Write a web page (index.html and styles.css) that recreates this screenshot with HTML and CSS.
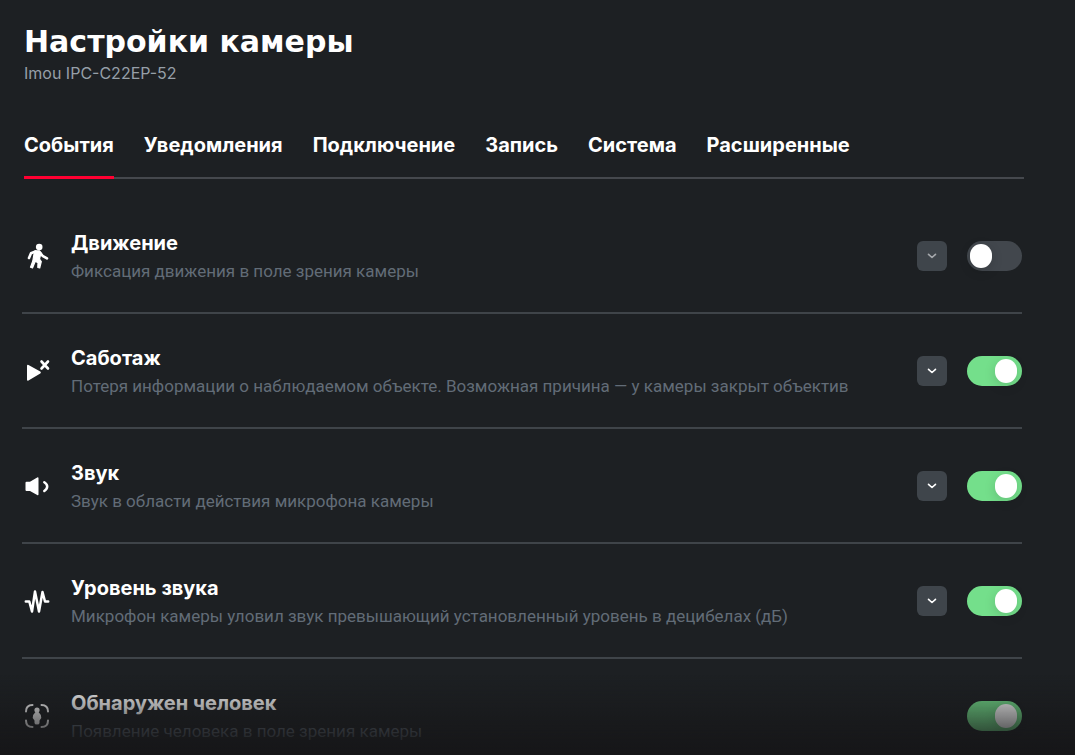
FILE: index.html
```html
<!DOCTYPE html>
<html lang="ru">
<head>
<meta charset="utf-8">
<title>Настройки камеры</title>
<link rel="stylesheet" href="styles.css">
</head>
<body>
<main class="page">
  <header class="header">
    <h1 class="title">Настройки камеры</h1>
    <p class="model">Imou IPC-C22EP-52</p>
  </header>
  <nav class="tabs" aria-label="Разделы настроек">
    <button class="tab tab-active" type="button" aria-current="page">События</button>
    <button class="tab" type="button">Уведомления</button>
    <button class="tab" type="button">Подключение</button>
    <button class="tab" type="button">Запись</button>
    <button class="tab" type="button">Система</button>
    <button class="tab" type="button">Расширенные</button>
  </nav>
  <ul class="events">
    <li class="event">
      <svg class="icon" viewBox="0 0 30 30" aria-hidden="true"><circle cx="17.200" cy="6" r="3.300" fill="currentColor"/><path d="M13.500 10.500 L9 12.300 L7 17 M18 11.500 L20.500 14.800 L25 17.300" fill="none" stroke="currentColor" stroke-width="2.600" stroke-linecap="round" stroke-linejoin="round"/><path d="M13 9.800 H17.500 L19 12 L17.500 18 L19.300 20.500 L17.700 27 L15.800 26.500 L16 21.800 L13.300 20.300 L10.500 26.900 L8.500 26.300 L10.800 20 L11.800 14 Z" fill="currentColor" stroke="currentColor" stroke-width="1.200" stroke-linejoin="round"/></svg>
      <div class="text">
        <label class="name" for="motion">Движение</label>
        <p class="note">Фиксация движения в поле зрения камеры</p>
      </div>
      <button class="expand expand-muted" type="button" aria-label="Развернуть"><svg class="chevron" viewBox="0 0 10 6" aria-hidden="true"><path d="M1.500 1.300 5 4.500 8.500 1.300"/></svg></button>
      <input class="switch" type="checkbox" role="switch" id="motion">
    </li>
    <li class="event">
      <svg class="icon" viewBox="0 0 30 30" aria-hidden="true"><path d="M6.500 9 18.300 15.600 Q19.500 16.600 18.300 17.600 L6.500 24.600 Q5 25 5 23.700 V9.800 Q5 8.500 6.500 9Z" fill="currentColor"/><path d="M19.500 5.500 26 12.500 M26 5.500 19.500 12.500" stroke="currentColor" stroke-width="2.600" stroke-linecap="round"/></svg>
      <div class="text">
        <label class="name" for="sabotage">Саботаж</label>
        <p class="note">Потеря информации о наблюдаемом объекте. Возможная причина — у камеры закрыт объектив</p>
      </div>
      <button class="expand" type="button" aria-label="Развернуть"><svg class="chevron" viewBox="0 0 10 6" aria-hidden="true"><path d="M1.500 1.300 5 4.500 8.500 1.300"/></svg></button>
      <input class="switch" type="checkbox" role="switch" id="sabotage" checked>
    </li>
    <li class="event">
      <svg class="icon" viewBox="0 0 30 30" aria-hidden="true"><path d="M4.500 10.800 H8 L15.200 6.500 Q16.500 6 16.500 7.300 V23.300 Q16.500 24.600 15.200 24 L8 20 H4.500 Q3.500 20 3.500 19 V11.800 Q3.500 10.800 4.500 10.800Z" fill="currentColor"/><path d="M22.300 11.200 Q25.200 13 25.200 15.500 T22.300 20" fill="none" stroke="currentColor" stroke-width="2.500" stroke-linecap="round"/></svg>
      <div class="text">
        <label class="name" for="sound">Звук</label>
        <p class="note">Звук в области действия микрофона камеры</p>
      </div>
      <button class="expand" type="button" aria-label="Развернуть"><svg class="chevron" viewBox="0 0 10 6" aria-hidden="true"><path d="M1.500 1.300 5 4.500 8.500 1.300"/></svg></button>
      <input class="switch" type="checkbox" role="switch" id="sound" checked>
    </li>
    <li class="event">
      <svg class="icon" viewBox="0 0 30 30" aria-hidden="true"><path d="M3.800 15.500 H7.300 L10 25.500 L13 5.500 L17 25.500 L20.500 6 L23 15.500 H26.200" fill="none" stroke="currentColor" stroke-width="2.500" stroke-linecap="round" stroke-linejoin="round"/></svg>
      <div class="text">
        <label class="name" for="level">Уровень звука</label>
        <p class="note">Микрофон камеры уловил звук превышающий установленный уровень в децибелах (дБ)</p>
      </div>
      <button class="expand" type="button" aria-label="Развернуть"><svg class="chevron" viewBox="0 0 10 6" aria-hidden="true"><path d="M1.500 1.300 5 4.500 8.500 1.300"/></svg></button>
      <input class="switch" type="checkbox" role="switch" id="level" checked>
    </li>
    <li class="event">
      <svg class="icon" viewBox="0 0 30 30" aria-hidden="true"><path d="M4 10.500 Q4 4 10.500 4 M19.500 4 Q26 4 26 10.500 M26 19.500 Q26 26 19.500 26 M10.500 26 Q4 26 4 19.500" fill="none" stroke="currentColor" stroke-width="2" stroke-linecap="round"/><circle cx="15" cy="9" r="2.600" fill="currentColor"/><path d="M13.500 11 H16.500 Q19 13 19.300 17 L17.500 19.500 V22 Q17.500 23.500 15 23.500 T12.500 22 V19.500 L10.700 17 Q11 13 13.500 11Z" fill="currentColor"/></svg>
      <div class="text">
        <label class="name" for="person">Обнаружен человек</label>
        <p class="note">Появление человека в поле зрения камеры</p>
      </div>
      <input class="switch" type="checkbox" role="switch" id="person" checked>
    </li>
  </ul>
  <div class="fade"></div>
</main>
</body>
</html>
```
FILE: styles.css
```css
* { box-sizing: border-box; }
body {
  margin: 0;
  background: #1d2023;
  color: #fff;
  font-family: Inter, "Noto Sans", sans-serif;
}
.page {
  height: 100vh;
  overflow: hidden;
  padding: 24px 51px 0 24px;
}
.title {
  margin: 0;
  font: 700 30px/36px "DejaVu Sans", sans-serif;
}
.model {
  margin: 2px 0 0;
  font-size: 16px;
  line-height: 22px;
  color: #969fa8;
}
.tabs {
  display: flex;
  gap: 30px;
  margin-top: 44px;
  border-bottom: 2px solid #45484d;
}
.tab {
  margin: 0 0 -2px;
  padding: 0 0 14px;
  border: 0;
  border-bottom: 3px solid transparent;
  background: none;
  color: inherit;
  font: 700 20px/34px Inter, sans-serif;
  cursor: pointer;
}
.tab-active { border-bottom-color: #ff0032; }
.events {
  margin: 20px 2px 0 -2px;
  padding: 0;
  list-style: none;
}
.event {
  display: flex;
  align-items: center;
  height: 115px;
  border-bottom: 2px solid #3f4449;
}
.icon {
  flex: none;
  width: 30px;
  height: 30px;
}
.text {
  flex: 1;
  min-width: 0;
  padding: 2px 0 0 19px;
}
.name {
  display: block;
  font: 700 20px/28px Inter, sans-serif;
}
.note {
  margin: 0;
  font: 400 17px/28px Roboto, sans-serif;
  color: #626c77;
}
.expand {
  display: grid;
  place-items: center;
  width: 30px;
  height: 30px;
  margin-right: 20px;
  padding: 0;
  border: 0;
  border-radius: 6px;
  background: #3f454b;
  color: #fff;
}
.expand-muted { color: #a5a8ac; }
.chevron {
  width: 10px;
  height: 6px;
  fill: none;
  stroke: currentColor;
  stroke-width: 1.6;
  stroke-linecap: round;
  stroke-linejoin: round;
}
.switch {
  appearance: none;
  flex: none;
  display: flex;
  align-items: center;
  width: 55px;
  height: 30px;
  margin: 0;
  padding: 0 3px;
  border-radius: 15px;
  background: #42474d;
}
.switch::before {
  content: "";
  width: 22px;
  height: 24px;
  border-radius: 12px;
  background: #fff;
  box-shadow: 0 3px 12px rgba(0, 0, 0, 0.15);
}
.switch:checked {
  justify-content: flex-end;
  padding-right: 5px;
  background: #74df8b;
}
.fade {
  position: fixed;
  inset: auto 0 0;
  height: 80px;
  background: linear-gradient(transparent, #161618);
  pointer-events: none;
}
```
